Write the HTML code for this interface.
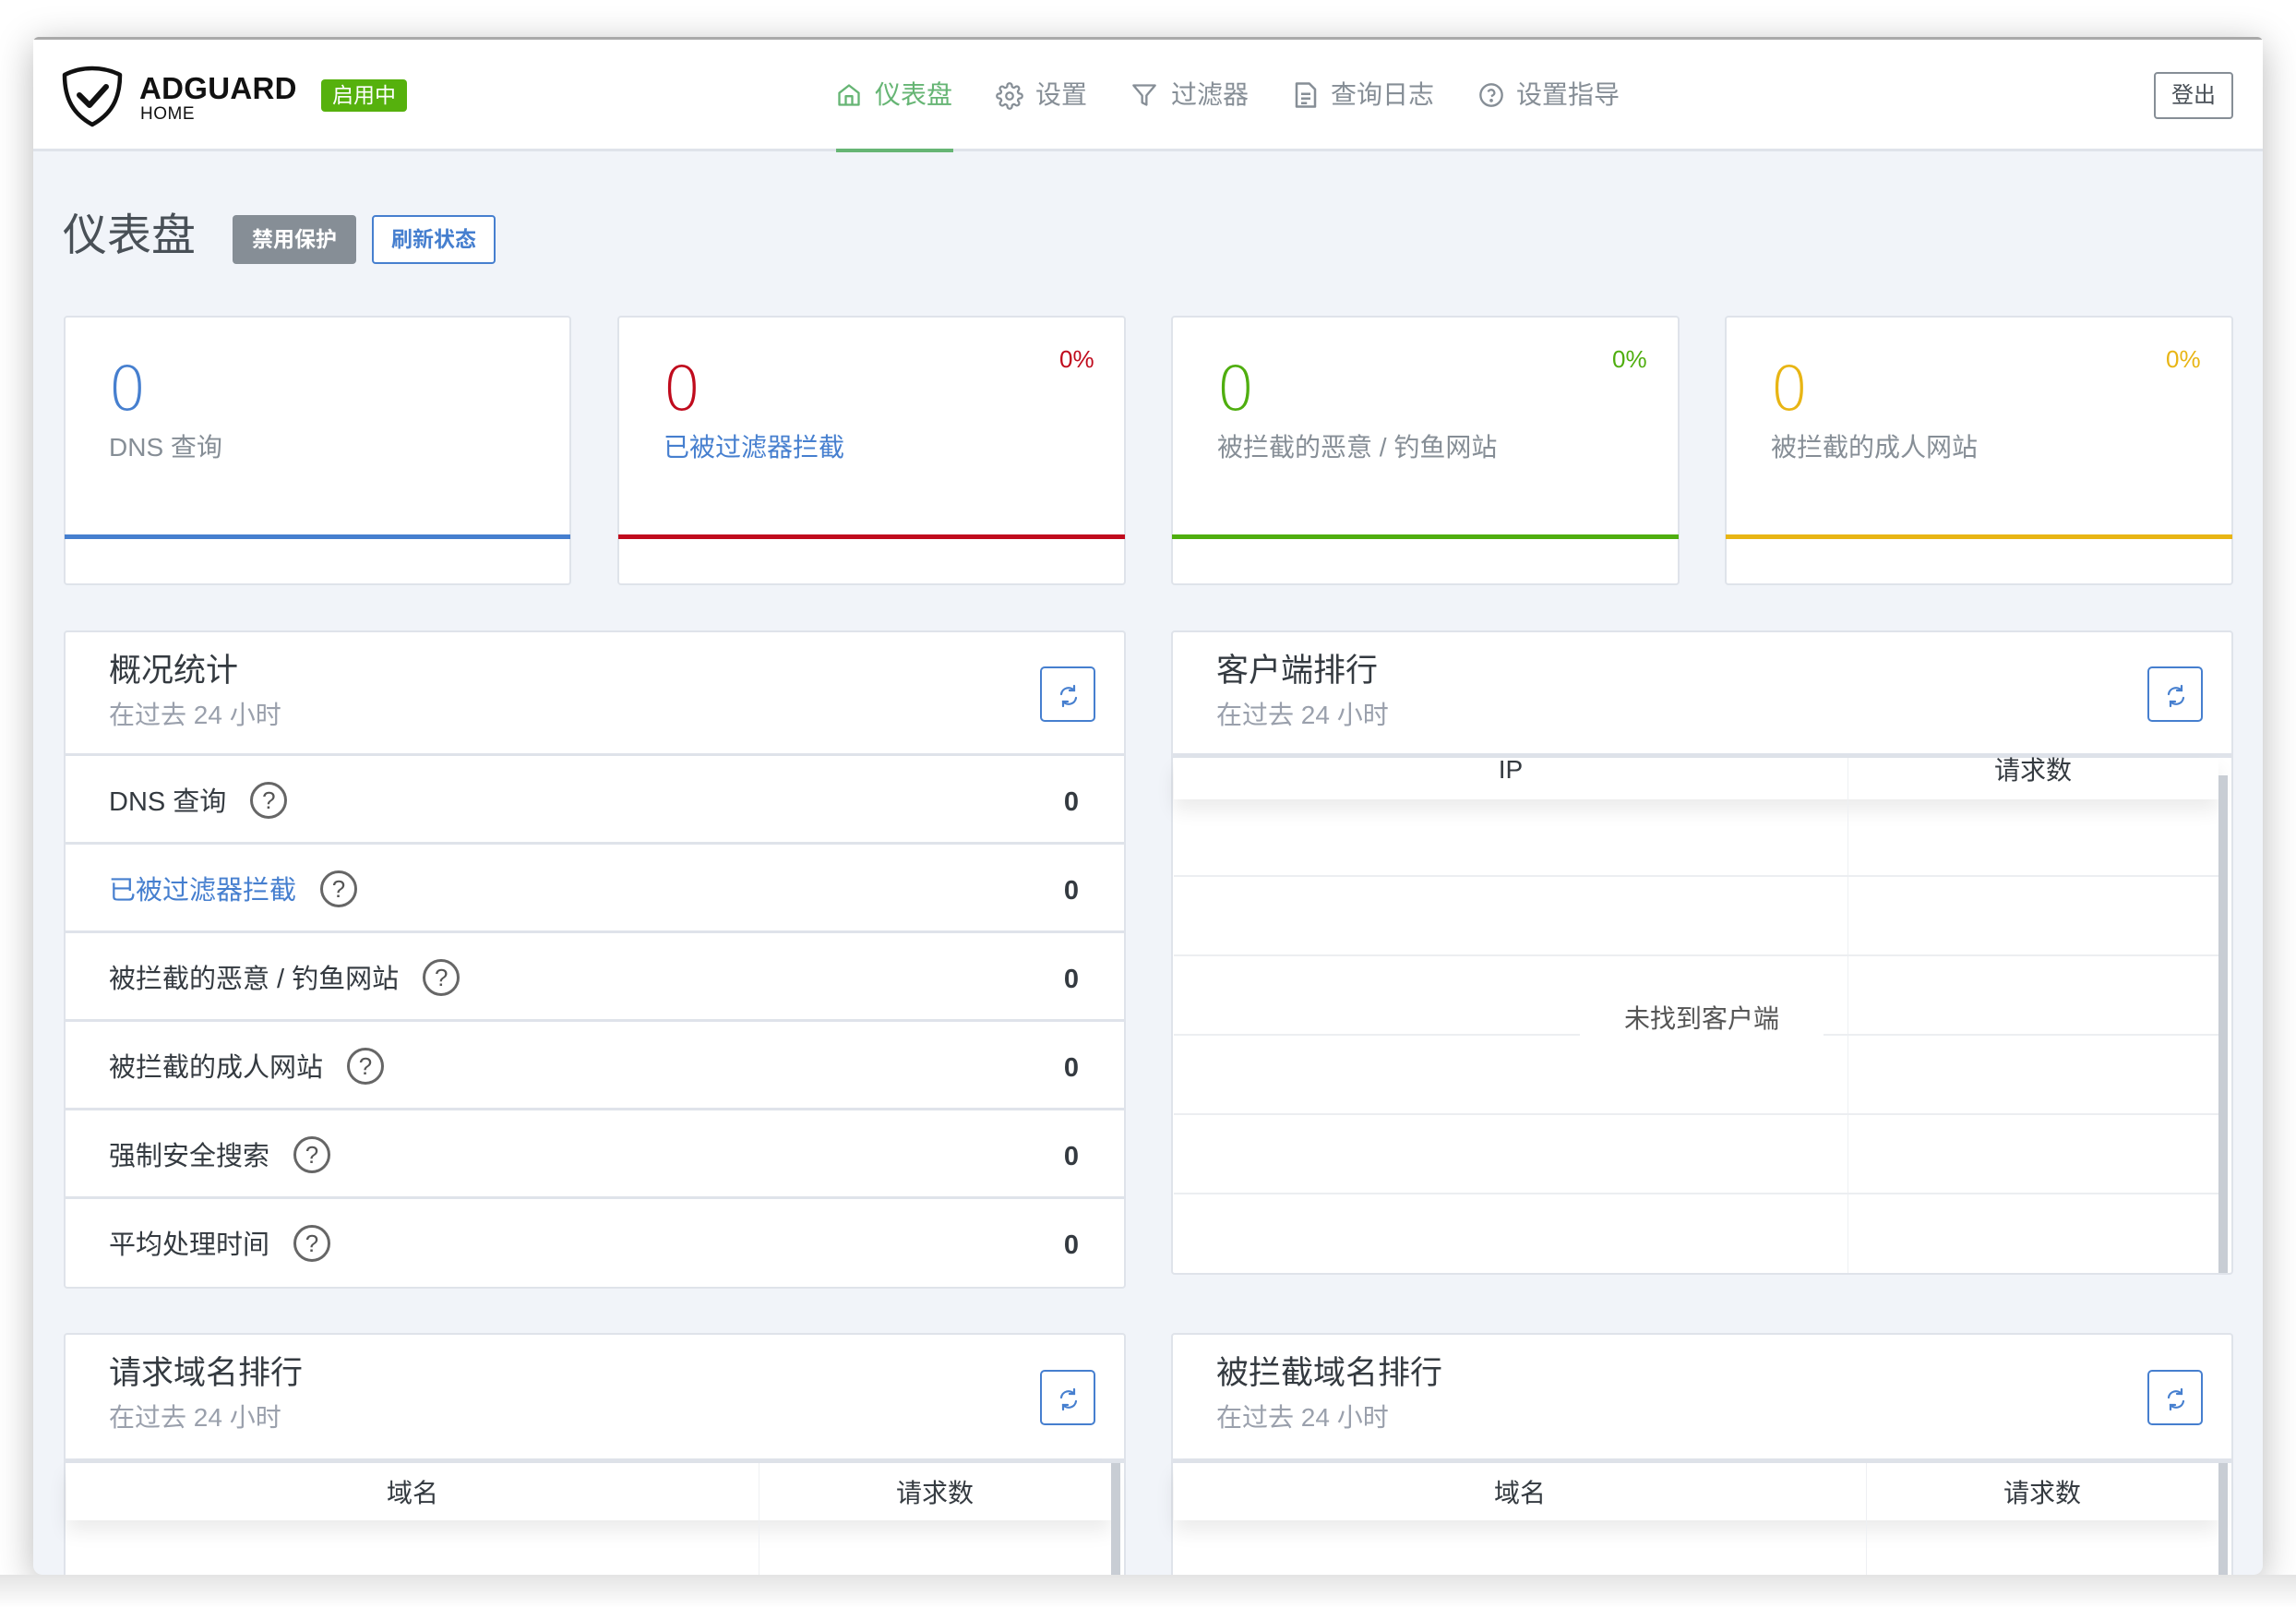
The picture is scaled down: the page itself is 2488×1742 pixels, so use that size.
<!DOCTYPE html>
<html><head><meta charset="utf-8">
<style>
*{box-sizing:border-box;margin:0;padding:0}
body{width:2488px;height:1742px;background:#fff;position:relative;overflow:hidden;font-family:"Liberation Sans","Noto Sans CJK SC",sans-serif;color:#495057}
.a{position:absolute}
.win{left:36px;top:40px;width:2416px;height:1666px;background:#f1f4f9;border-radius:6px 6px 10px 10px;box-shadow:0 8px 40px rgba(0,0,0,.28);overflow:hidden;border-top:3px solid #a9a9a9}
.hdr{left:36px;top:43px;width:2416px;height:121px;background:#fff;border-bottom:3px solid #dfe3ea}
.nav{top:84px;font-size:28px;color:#868e96;line-height:38px;white-space:nowrap}
.card{background:#fff;border:2px solid #dfe3ea;border-radius:4px}
.num{font-size:66px;line-height:70px;font-family:"DejaVu Sans","Liberation Sans",sans-serif;font-weight:300}
.lbl{font-size:28px;color:#868e96;line-height:36px;white-space:nowrap}
.pct{font-size:26px;line-height:30px}
.bar{height:5px}
.ptitle{font-size:35px;color:#343a40;line-height:42px;white-space:nowrap}
.psub{font-size:28px;color:#9aa0ac;line-height:34px;white-space:nowrap}
.rbtn{width:60px;height:60px;border:2px solid #467fcf;border-radius:5px;background:#fff}
.rbtn svg{position:absolute;left:17px;top:17px}
.row{height:96px;border-top:3px solid #dfe3ea;font-size:29px;line-height:100px;color:#343a40;white-space:nowrap}
.q{display:inline-block;width:40px;height:40px;border:3px solid #666;border-radius:50%;font-size:26px;line-height:34px;text-align:center;vertical-align:middle;margin-left:26px;color:#555;margin-top:-6px}
.val{position:absolute;right:50px;top:0;font-weight:bold;color:#343a40}
.th{font-size:28px;color:#343a40;text-align:center;white-space:nowrap}
</style></head><body>
<div class="a win"></div>
<div class="a hdr"></div>

<svg class="a" style="left:66px;top:70px" width="68" height="68" viewBox="0 0 68 68">
<path d="M34 4 C22 4 12 7 4 11 C4 38 14 54 34 65 C54 54 64 38 64 11 C56 7 46 4 34 4 Z" fill="none" stroke="#111" stroke-width="4.5" stroke-linejoin="round"/>
<path d="M20 33 L31 44 L49 24" fill="none" stroke="#111" stroke-width="6" stroke-linecap="round" stroke-linejoin="round"/>
</svg>
<div class="a" style="left:151px;top:80px;font-size:33px;font-weight:bold;color:#111;letter-spacing:.3px;line-height:32px">ADGUARD</div>
<div class="a" style="left:152px;top:113px;font-size:19px;color:#111;line-height:22px;letter-spacing:.5px">HOME</div>
<div class="a" style="left:348px;top:86px;width:93px;height:35px;background:#56b10d;border-radius:4px;color:#fff;font-size:23px;line-height:35px;text-align:center">启用中</div>

<svg class="a" style="left:906px;top:89px" width="28" height="28" viewBox="0 0 24 24" fill="none" stroke="#66b574" stroke-width="2" stroke-linejoin="round"><path d="M3 10 L12 3 L21 10 V21 H3 Z"/><path d="M9 21 V13 H15 V21"/></svg>
<div class="a nav" style="left:948px;color:#66b574">仪表盘</div>
<div class="a" style="left:906px;top:161px;width:127px;height:4px;background:#66b574"></div>
<svg class="a" style="left:1079px;top:89px" width="30" height="30" viewBox="0 0 24 24" fill="none" stroke="#868e96" stroke-width="1.8"><circle cx="12" cy="12" r="3"/><path d="M19.4 15a1.65 1.65 0 0 0 .33 1.82l.06.06a2 2 0 1 1-2.83 2.830l-.06-.06a1.65 1.65 0 0 0-1.82-.33 1.65 1.65 0 0 0-1 1.51V21a2 2 0 1 1-4 0v-.09A1.650 1.65 0 0 0 9 19.4a1.65 1.65 0 0 0-1.82.33l-.06.06a2 2 0 1 1-2.83-2.83l.06-.06A1.65 1.65 0 0 0 4.68 15a1.65 1.65 0 0 0-1.51-1H3a2 2 0 1 1 0-4h.09A1.65 1.65 0 0 0 4.6 9a1.65 1.65 0 0 0-.33-1.82l-.06-.06a2 2 0 1 1 2.83-2.83l.06.06A1.65 1.65 0 0 0 9 4.68a1.65 1.65 0 0 0 1-1.51V3a2 2 0 1 1 4 0v.09a1.65 1.65 0 0 0 1 1.51 1.65 1.65 0 0 0 1.82-.33l.06-.06a2 2 0 1 1 2.83 2.83l-.06.06A1.65 1.65 0 0 0 19.4 9a1.65 1.65 0 0 0 1.51 1H21a2 2 0 1 1 0 4h-.09a1.65 1.65 0 0 0-1.51 1z"/></svg>
<div class="a nav" style="left:1122px">设置</div>
<svg class="a" style="left:1226px;top:89px" width="28" height="28" viewBox="0 0 24 24" fill="none" stroke="#868e96" stroke-width="2" stroke-linejoin="round"><path d="M22 3H2l8 9.46V19l4 2v-8.54z"/></svg>
<div class="a nav" style="left:1269px">过滤器</div>
<svg class="a" style="left:1402px;top:88px" width="26" height="30" viewBox="0 0 20 24" fill="none" stroke="#868e96" stroke-width="2" stroke-linejoin="round"><path d="M2 2H13L18 7V22H2Z"/><path d="M6 11H14M6 15H14M6 19H11"/></svg>
<div class="a nav" style="left:1442px">查询日志</div>
<svg class="a" style="left:1602px;top:89px" width="28" height="28" viewBox="0 0 24 24" fill="none" stroke="#868e96" stroke-width="2"><circle cx="12" cy="12" r="10"/><path d="M9.1 9a3 3 0 0 1 5.8 1c0 2-3 3-3 3"/><circle cx="12" cy="17" r=".6" fill="#868e96"/></svg>
<div class="a nav" style="left:1643px">设置指导</div>
<div class="a" style="left:2334px;top:78px;width:86px;height:51px;border:2px solid #868e96;border-radius:4px;font-size:24px;line-height:47px;text-align:center;color:#495057">登出</div>

<div class="a" style="left:68px;top:228px;font-size:48px;line-height:56px;color:#495057">仪表盘</div>
<div class="a" style="left:252px;top:233px;width:134px;height:53px;background:#868e96;border-radius:4px;color:#fff;font-size:23px;line-height:53px;text-align:center;font-weight:bold">禁用保护</div>
<div class="a" style="left:403px;top:233px;width:134px;height:53px;border:2px solid #467fcf;border-radius:4px;color:#467fcf;font-size:23px;line-height:49px;text-align:center;font-weight:bold;background:#fff">刷新状态</div>

<div class="a card" style="left:69px;top:342px;width:550px;height:292px"></div>
<div class="a num" style="left:117px;top:387px;color:#467fcf">0</div>
<div class="a lbl" style="left:118px;top:467px">DNS 查询</div>
<div class="a bar" style="left:70px;top:579px;width:548px;background:#467fcf"></div>

<div class="a card" style="left:669px;top:342px;width:551px;height:292px"></div>
<div class="a num" style="left:718px;top:387px;color:#c00b1d">0</div>
<div class="a lbl" style="left:719px;top:467px;color:#467fcf">已被过滤器拦截</div>
<div class="a pct" style="left:1148px;top:374px;color:#c00b1d">0%</div>
<div class="a bar" style="left:670px;top:579px;width:549px;background:#c00b1d"></div>

<div class="a card" style="left:1269px;top:342px;width:551px;height:292px"></div>
<div class="a num" style="left:1318px;top:387px;color:#4fae0f">0</div>
<div class="a lbl" style="left:1319px;top:467px">被拦截的恶意 / 钓鱼网站</div>
<div class="a pct" style="left:1747px;top:374px;color:#4fae0f">0%</div>
<div class="a bar" style="left:1270px;top:579px;width:549px;background:#4fae0f"></div>

<div class="a card" style="left:1869px;top:342px;width:551px;height:292px"></div>
<div class="a num" style="left:1918px;top:387px;color:#e8b514">0</div>
<div class="a lbl" style="left:1919px;top:467px">被拦截的成人网站</div>
<div class="a pct" style="left:2347px;top:374px;color:#e8b514">0%</div>
<div class="a bar" style="left:1870px;top:579px;width:549px;background:#e8b514"></div>

<div class="a card" style="left:69px;top:683px;width:1151px;height:713px"></div>
<div class="a ptitle" style="left:118px;top:706px">概况统计</div>
<div class="a psub" style="left:118px;top:758px">在过去 24 小时</div>
<div class="a rbtn" style="left:1127px;top:722px"><svg width="24" height="26" viewBox="0 0 24 26" fill="none" stroke="#467fcf" stroke-width="2.2" stroke-linecap="round"><path d="M4 11a8 8 0 0 1 14-4"/><path d="M18 2v5h-5"/><path d="M20 15a8 8 0 0 1-14 4"/><path d="M6 24v-5h5"/></svg></div>
<div class="a" style="left:70px;top:816px;width:1149px">
 <div class="row" style="position:relative;padding-left:48px">DNS 查询<span class="q">?</span><span class="val">0</span></div>
 <div class="row" style="position:relative;padding-left:48px;color:#467fcf">已被过滤器拦截<span class="q">?</span><span class="val">0</span></div>
 <div class="row" style="position:relative;padding-left:48px">被拦截的恶意 / 钓鱼网站<span class="q">?</span><span class="val">0</span></div>
 <div class="row" style="position:relative;padding-left:48px">被拦截的成人网站<span class="q">?</span><span class="val">0</span></div>
 <div class="row" style="position:relative;padding-left:48px">强制安全搜索<span class="q">?</span><span class="val">0</span></div>
 <div class="row" style="position:relative;padding-left:48px">平均处理时间<span class="q">?</span><span class="val">0</span></div>
</div>

<div class="a card" style="left:1269px;top:683px;width:1151px;height:698px"></div>
<div class="a ptitle" style="left:1318px;top:706px">客户端排行</div>
<div class="a psub" style="left:1318px;top:758px">在过去 24 小时</div>
<div class="a rbtn" style="left:2327px;top:722px"><svg width="24" height="26" viewBox="0 0 24 26" fill="none" stroke="#467fcf" stroke-width="2.2" stroke-linecap="round"><path d="M4 11a8 8 0 0 1 14-4"/><path d="M18 2v5h-5"/><path d="M20 15a8 8 0 0 1-14 4"/><path d="M6 24v-5h5"/></svg></div>
<div class="a" style="left:1270px;top:816px;width:1149px;height:5px;background:#dfe3ea"></div>
<div class="a" style="left:1272px;top:821px;width:1132px;height:45px;background:#fff;box-shadow:0 12px 20px rgba(0,0,0,.08)"></div>
<div class="a th" style="left:1272px;top:814px;width:730px;line-height:40px">IP</div>
<div class="a th" style="left:2003px;top:814px;width:400px;line-height:42px">请求数</div>
<div class="a" style="left:2002px;top:821px;width:1px;height:558px;background:#eef0f3"></div>
<div class="a" style="left:1272px;top:948px;width:1132px;height:2px;background:#eceef1"></div>
<div class="a" style="left:1272px;top:1034px;width:1132px;height:2px;background:#eceef1"></div>
<div class="a" style="left:1272px;top:1120px;width:1132px;height:2px;background:#eceef1"></div>
<div class="a" style="left:1272px;top:1206px;width:1132px;height:2px;background:#eceef1"></div>
<div class="a" style="left:1272px;top:1292px;width:1132px;height:2px;background:#eceef1"></div>
<div class="a" style="left:1712px;top:1084px;width:264px;height:40px;background:#fff;font-size:28px;line-height:40px;text-align:center;color:#555">未找到客户端</div>
<div class="a" style="left:2404px;top:840px;width:10px;height:539px;background:#c8cdd4"></div>

<div class="a card" style="left:69px;top:1444px;width:1151px;height:264px;border-bottom:none;border-radius:4px 4px 0 0"></div>
<div class="a ptitle" style="left:118px;top:1467px">请求域名排行</div>
<div class="a psub" style="left:118px;top:1519px">在过去 24 小时</div>
<div class="a rbtn" style="left:1127px;top:1484px"><svg width="24" height="26" viewBox="0 0 24 26" fill="none" stroke="#467fcf" stroke-width="2.2" stroke-linecap="round"><path d="M4 11a8 8 0 0 1 14-4"/><path d="M18 2v5h-5"/><path d="M20 15a8 8 0 0 1-14 4"/><path d="M6 24v-5h5"/></svg></div>
<div class="a" style="left:70px;top:1580px;width:1149px;height:5px;background:#dfe3ea"></div>
<div class="a" style="left:72px;top:1585px;width:1132px;height:62px;background:#fff;box-shadow:0 12px 20px rgba(0,0,0,.08)"></div>
<div class="a th" style="left:72px;top:1597px;width:750px;line-height:42px">域名</div>
<div class="a th" style="left:822px;top:1597px;width:382px;line-height:42px">请求数</div>
<div class="a" style="left:822px;top:1585px;width:1px;height:121px;background:#eef0f3"></div>
<div class="a" style="left:1204px;top:1585px;width:10px;height:121px;background:#c8cdd4"></div>

<div class="a card" style="left:1269px;top:1444px;width:1151px;height:264px;border-bottom:none;border-radius:4px 4px 0 0"></div>
<div class="a ptitle" style="left:1318px;top:1467px">被拦截域名排行</div>
<div class="a psub" style="left:1318px;top:1519px">在过去 24 小时</div>
<div class="a rbtn" style="left:2327px;top:1484px"><svg width="24" height="26" viewBox="0 0 24 26" fill="none" stroke="#467fcf" stroke-width="2.2" stroke-linecap="round"><path d="M4 11a8 8 0 0 1 14-4"/><path d="M18 2v5h-5"/><path d="M20 15a8 8 0 0 1-14 4"/><path d="M6 24v-5h5"/></svg></div>
<div class="a" style="left:1270px;top:1580px;width:1149px;height:5px;background:#dfe3ea"></div>
<div class="a" style="left:1272px;top:1585px;width:1132px;height:62px;background:#fff;box-shadow:0 12px 20px rgba(0,0,0,.08)"></div>
<div class="a th" style="left:1272px;top:1597px;width:750px;line-height:42px">域名</div>
<div class="a th" style="left:2022px;top:1597px;width:382px;line-height:42px">请求数</div>
<div class="a" style="left:2022px;top:1585px;width:1px;height:121px;background:#eef0f3"></div>
<div class="a" style="left:2404px;top:1585px;width:10px;height:121px;background:#c8cdd4"></div>

<div class="a" style="left:0;top:1706px;width:2488px;height:36px;background:linear-gradient(#e4e4e4,#fff)"></div>
</body></html>
